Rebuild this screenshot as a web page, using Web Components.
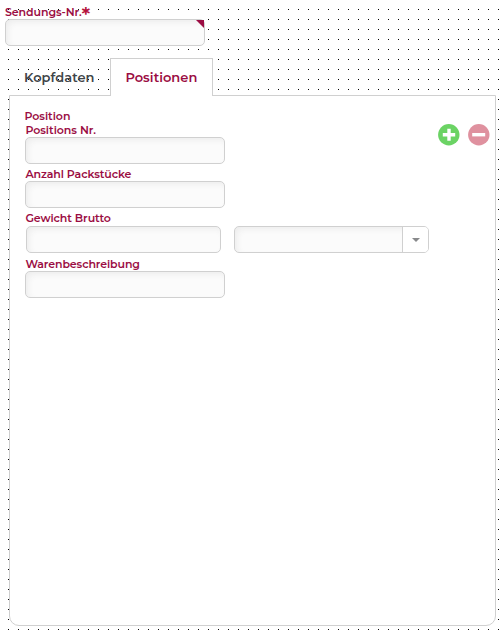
<!DOCTYPE html>
<html lang="de">
<head>
<meta charset="utf-8">
<title>Sendung</title>
<style>
  body {
    margin: 0;
    font-family: Montserrat, Inter, "Open Sans", sans-serif;
    background: #fff;
  }
</style>
</head>
<body>
<form-canvas>
  <form-field class="shipment" label="Sendungs-Nr." text-width="76.5" required></form-field>
  <tab-panel>
    <tab-item slot="tab" label="Kopfdaten" text-width="70.5"></tab-item>
    <tab-item slot="tab" label="Positionen" text-width="72" active></tab-item>
    <position-form></position-form>
  </tab-panel>
</form-canvas>

<script>
  // Text with a set width: the letter spacing takes up the difference.
  class FitText extends HTMLElement {
    connectedCallback() {
      this.attachShadow({ mode: 'open' });
      this.shadowRoot.innerHTML = `
        <style>
          :host { display: inline-block; white-space: nowrap; }
        </style>
        <span>${this.getAttribute('text')}</span>
      `;
      const span = this.shadowRoot.querySelector('span');
      const width = Number(this.getAttribute('width'));
      const gap = (width - span.getBoundingClientRect().width) / span.textContent.length;
      span.style.letterSpacing = gap + 'px';
    }
  }

  class FormCanvas extends HTMLElement {
    connectedCallback() {
      this.attachShadow({ mode: 'open' });
      this.shadowRoot.innerHTML = `
        <style>
          :host {
            display: flex;
            flex-direction: column;
            box-sizing: border-box;
            width: 503px;
            height: 633px;
            padding: 5px 7px 7px 5px;
            overflow: hidden;
            background: conic-gradient(from 0deg at 1px 1px, transparent 75%, #000 0) 8px 9px / 10px 10px, #fff;
          }
          ::slotted(tab-panel) { margin: 12px 0 0 4px; flex: 1; }
        </style>
        <slot></slot>
      `;
    }
  }

  class TextBox extends HTMLElement {
    connectedCallback() {
      this.attachShadow({ mode: 'open' });
      this.shadowRoot.innerHTML = `
        <style>
          :host {
            display: flex;
            justify-content: flex-end;
            position: relative;
            box-sizing: border-box;
            width: 200px;
            height: 27px;
            border: 1px solid #d0d0d0;
            border-radius: 5px;
            background: #fbfbfb;
            box-shadow: inset 3px 3px 6px -1px #ececec;
          }
          .corner {
            position: absolute;
            top: 0;
            right: 0;
            width: 8px;
            height: 8px;
            background: #9b0d43;
            clip-path: polygon(0 0, 100% 0, 100% 100%);
          }
          .arrow {
            display: flex;
            align-items: center;
            justify-content: center;
            box-sizing: border-box;
            width: 26px;
            border-left: 1px solid #d0d0d0;
            border-radius: 0 4px 4px 0;
            background: #fff;
          }
        </style>
        ${this.hasAttribute('required') ? '<div class="corner"></div>' : ''}
        ${this.hasAttribute('dropdown') ? '<div class="arrow"><svg width="8" height="4"><path d="M0 0h8L4 4z" fill="#88898b"/></svg></div>' : ''}
      `;
    }
  }

  class FormField extends HTMLElement {
    connectedCallback() {
      const required = this.hasAttribute('required');
      this.attachShadow({ mode: 'open' });
      this.shadowRoot.innerHTML = `
        <style>
          :host { display: block; }
          .label {
            display: flex;
            height: 14px;
            line-height: 14px;
            font-size: 11px;
            font-weight: 600;
            color: #9b0d43;
          }
          .star { font-size: 21px; line-height: 19px; color: #b5123c; }
        </style>
        <div class="label">
          <fit-text text="${this.getAttribute('label')}" width="${this.getAttribute('text-width')}"></fit-text>
          ${required ? '<span class="star">*</span>' : ''}
        </div>
        <slot><text-box ${required ? 'required' : ''}></text-box></slot>
      `;
    }
  }

  class TabItem extends HTMLElement {
    connectedCallback() {
      this.attachShadow({ mode: 'open' });
      this.shadowRoot.innerHTML = `
        <style>
          :host {
            display: block;
            box-sizing: border-box;
            height: 38px;
            width: 101px;
            padding: 0 0 0 15px;
            border-top: 1px solid transparent;
            line-height: 37px;
            font-size: 13px;
            font-weight: 600;
            color: #3f4549;
          }
          :host([active]) {
            position: relative;
            width: 103px;
            padding-left: 14.4px;
            border: 1px solid #d0d0d0;
            border-bottom: 0;
            background: #fff;
            color: #9b0d43;
          }
        </style>
        <fit-text text="${this.getAttribute('label')}" width="${this.getAttribute('text-width')}"></fit-text>
      `;
    }
  }

  class TabPanel extends HTMLElement {
    connectedCallback() {
      this.attachShadow({ mode: 'open' });
      this.shadowRoot.innerHTML = `
        <style>
          :host { display: flex; flex-direction: column; width: 487px; }
          .tabs { display: flex; height: 37px; }
          .content {
            flex: 1;
            box-sizing: border-box;
            padding: 13px 5px 0 14px;
            border: 1px solid #d0d0d0;
            border-radius: 0 0 10px 10px;
            background: #fff;
          }
        </style>
        <div class="tabs"><slot name="tab"></slot></div>
        <div class="content"><slot></slot></div>
      `;
    }
  }

  class RoundButton extends HTMLElement {
    connectedCallback() {
      const add = this.getAttribute('kind') === 'add';
      this.attachShadow({ mode: 'open' });
      this.shadowRoot.innerHTML = `
        <style>
          :host { display: block; width: 22px; height: 22px; }
          svg { display: block; }
        </style>
        <svg width="22" height="22" viewBox="0 0 22 22">
          <circle cx="10.8" cy="10.7" r="10.7" fill="${add ? '#6bd364' : '#df919f'}"/>
          <path d="${add ? 'M4.8 10.7h12.4M11 4.8v12' : 'M4.2 10.7h13'}" stroke="#fff" stroke-width="3.4"/>
        </svg>
      `;
    }
  }

  class PositionForm extends HTMLElement {
    connectedCallback() {
      this.attachShadow({ mode: 'open' });
      this.shadowRoot.innerHTML = `
        <style>
          :host { display: flex; justify-content: space-between; }
          .title {
            height: 14px;
            padding-left: 0.4px;
            line-height: 14px;
            font-size: 11px;
            font-weight: 600;
            color: #9b0d43;
          }
          .fields { display: flex; flex-direction: column; gap: 3px; padding-left: 1px; }
          .fields form-field { text-indent: 0.4px; }
          .row { display: flex; gap: 13px; padding: 1px 0 1px 1px; }
          .row text-box { width: 195px; }
        
          .actions { display: flex; gap: 8px; padding-top: 15px; }
        </style>
        <div>
          <div class="title"><fit-text text="Position" width="46"></fit-text></div>
          <div class="fields">
            <form-field label="Positions Nr." text-width="70.5"></form-field>
            <form-field label="Anzahl Packstücke" text-width="106"></form-field>
            <form-field label="Gewicht Brutto" text-width="85.5"></form-field>
            <form-field label="Warenbeschreibung" text-width="114.5"></form-field>
          </div>
        </div>
        <div class="actions">
          <round-button kind="add"></round-button>
          <round-button kind="remove"></round-button>
        </div>
      `;
      // The weight goes with its unit, side by side under one label
      const weight = this.shadowRoot.querySelector('[label="Gewicht Brutto"]');
      weight.innerHTML = '<div class="row"><text-box></text-box><text-box dropdown></text-box></div>';
    }
  }

  customElements.define('fit-text', FitText);
  customElements.define('text-box', TextBox);
  customElements.define('form-field', FormField);
  customElements.define('tab-item', TabItem);
  customElements.define('tab-panel', TabPanel);
  customElements.define('round-button', RoundButton);
  customElements.define('position-form', PositionForm);
  customElements.define('form-canvas', FormCanvas);
</script>
</body>
</html>
